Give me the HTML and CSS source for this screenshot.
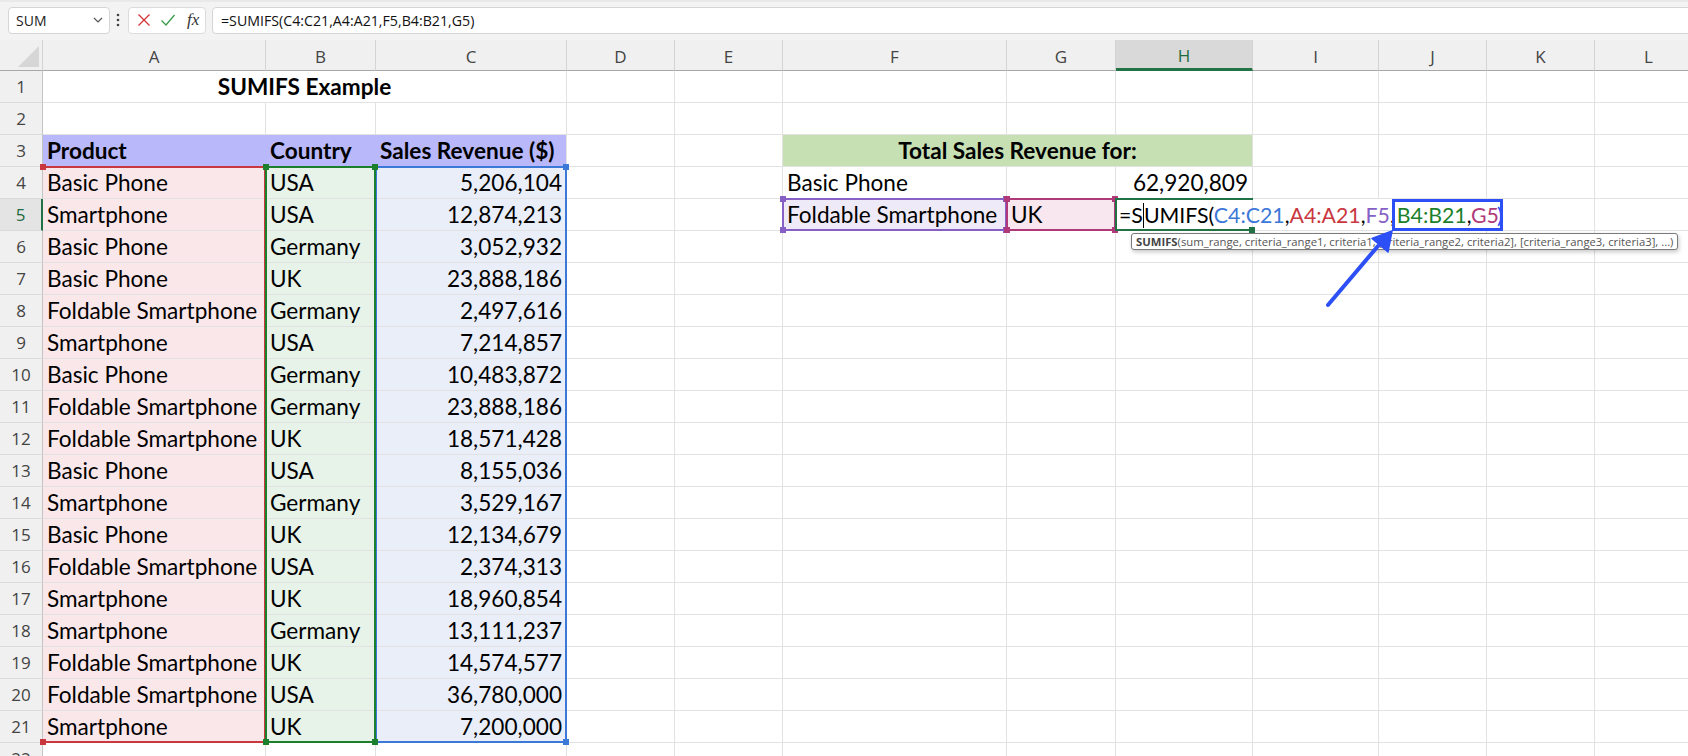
FILE: index.html
```html
<!DOCTYPE html>
<html>
<head>
<meta charset="utf-8">
<title>SUMIFS Example</title>
<link rel="stylesheet" href="styles.css">
</head>
<body>
<div class="toolbar">
  <div class="namebox"><span>SUM</span><svg class="chev" width="10" height="6" viewBox="0 0 10 6"><path d="M1 1l4 4 4-4" fill="none" stroke="#555" stroke-width="1.2"/></svg></div>
  <svg class="vdots" width="4" height="14" viewBox="0 0 4 14"><circle cx="2" cy="2" r="1.3"/><circle cx="2" cy="7" r="1.3"/><circle cx="2" cy="12" r="1.3"/></svg>
  <div class="fbtns">
    <svg width="14" height="14" viewBox="0 0 14 14"><path d="M1.5 1.5l11 11M12.5 1.5l-11 11" stroke="#d13438" stroke-width="1.3" fill="none"/></svg>
    <svg width="16" height="14" viewBox="0 0 16 14"><path d="M1.5 7.5l4.5 4.5L14.5 2" stroke="#3a9b4a" stroke-width="1.3" fill="none"/></svg>
    <span class="fx">fx</span>
  </div>
  <div class="fbox">=SUMIFS(C4:C21,A4:A21,F5,B4:B21,G5)</div>
</div>

<div class="sheet">
  <div class="ch corner"></div><div class="ch">A</div><div class="ch">B</div><div class="ch">C</div><div class="ch">D</div><div class="ch">E</div><div class="ch">F</div><div class="ch">G</div><div class="ch sel">H</div><div class="ch">I</div><div class="ch">J</div><div class="ch">K</div><div class="ch">L</div>

  <div class="rh">1</div><div class="c span3 ctr bold">SUMIFS Example</div><div class="c"></div><div class="c"></div><div class="c"></div><div class="c"></div><div class="c"></div><div class="c"></div><div class="c"></div><div class="c"></div><div class="c"></div>

  <div class="rh">2</div><div class="c"></div><div class="c"></div><div class="c"></div><div class="c"></div><div class="c"></div><div class="c"></div><div class="c"></div><div class="c"></div><div class="c"></div><div class="c"></div><div class="c"></div><div class="c"></div>

  <div class="rh">3</div><div class="c hdr bold">Product</div><div class="c hdr bold">Country</div><div class="c hdr hdr-last bold">Sales Revenue ($)</div><div class="c"></div><div class="c"></div><div class="c span3 ctr bold total">Total Sales Revenue for:</div><div class="c"></div><div class="c"></div><div class="c"></div><div class="c"></div>

  <div class="rh">4</div>
  <div class="c ta ov"><i class="rng ra"><b class="sq tl"></b><b class="sq bl"></b></i>Basic Phone</div>
  <div class="c tb ov"><i class="rng rg"><b class="sq tl"></b><b class="sq tr"></b><b class="sq bl"></b><b class="sq br"></b></i>USA</div>
  <div class="c tc r ov"><i class="rng rc"><b class="sq tr"></b><b class="sq br"></b></i>5,206,104</div>
  <div class="c"></div><div class="c"></div><div class="c">Basic Phone</div><div class="c"></div><div class="c r">62,920,809</div><div class="c"></div><div class="c"></div><div class="c"></div><div class="c"></div>

  <div class="rh sel">5</div>
  <div class="c ta">Smartphone</div><div class="c tb">USA</div><div class="c tc r">12,874,213</div>
  <div class="c"></div><div class="c"></div>
  <div class="c tf ov"><i class="cellbox pf"><b class="sq tl"></b><b class="sq tr"></b><b class="sq bl"></b><b class="sq br"></b></i>Foldable Smartphone</div>
  <div class="c tg ov"><i class="cellbox pg"><b class="sq tl"></b><b class="sq tr"></b><b class="sq bl"></b><b class="sq br"></b></i>UK</div>
  <div class="c edit"><i class="active"><b class="sq br"></b></i><span class="ftext">=S<span class="caret"></span>UMIFS(<span class="k-blue">C4:C21</span>,<span class="k-red">A4:A21</span>,<span class="k-purple">F5</span>,<span class="hl"><span class="k-green">B4:B21</span>,<span class="k-mag">G5</span></span><span class="paren">)</span></span><div class="tip"><b>SUMIFS</b>(sum_range, criteria_range1, criteria1, [criteria_range2, criteria2], [criteria_range3, criteria3], ...)</div></div>
  <div class="c nob"></div><div class="c nob"></div><div class="c"></div><div class="c"></div>

  <div class="rh">6</div><div class="c ta">Basic Phone</div><div class="c tb">Germany</div><div class="c tc r">3,052,932</div><div class="c"></div><div class="c"></div><div class="c"></div><div class="c"></div><div class="c"></div><div class="c"></div><div class="c"></div><div class="c"></div><div class="c"></div>
  <div class="rh">7</div><div class="c ta">Basic Phone</div><div class="c tb">UK</div><div class="c tc r">23,888,186</div><div class="c"></div><div class="c"></div><div class="c"></div><div class="c"></div><div class="c"></div><div class="c"></div><div class="c"></div><div class="c"></div><div class="c"></div>
  <div class="rh">8</div><div class="c ta">Foldable Smartphone</div><div class="c tb">Germany</div><div class="c tc r">2,497,616</div><div class="c"></div><div class="c"></div><div class="c"></div><div class="c"></div><div class="c"></div><div class="c"></div><div class="c"></div><div class="c"></div><div class="c"></div>
  <div class="rh">9</div><div class="c ta">Smartphone</div><div class="c tb">USA</div><div class="c tc r">7,214,857</div><div class="c"></div><div class="c"></div><div class="c"></div><div class="c"></div><div class="c"></div><div class="c"></div><div class="c"></div><div class="c"></div><div class="c"></div>
  <div class="rh">10</div><div class="c ta">Basic Phone</div><div class="c tb">Germany</div><div class="c tc r">10,483,872</div><div class="c"></div><div class="c"></div><div class="c"></div><div class="c"></div><div class="c"></div><div class="c"></div><div class="c"></div><div class="c"></div><div class="c"></div>
  <div class="rh">11</div><div class="c ta">Foldable Smartphone</div><div class="c tb">Germany</div><div class="c tc r">23,888,186</div><div class="c"></div><div class="c"></div><div class="c"></div><div class="c"></div><div class="c"></div><div class="c"></div><div class="c"></div><div class="c"></div><div class="c"></div>
  <div class="rh">12</div><div class="c ta">Foldable Smartphone</div><div class="c tb">UK</div><div class="c tc r">18,571,428</div><div class="c"></div><div class="c"></div><div class="c"></div><div class="c"></div><div class="c"></div><div class="c"></div><div class="c"></div><div class="c"></div><div class="c"></div>
  <div class="rh">13</div><div class="c ta">Basic Phone</div><div class="c tb">USA</div><div class="c tc r">8,155,036</div><div class="c"></div><div class="c"></div><div class="c"></div><div class="c"></div><div class="c"></div><div class="c"></div><div class="c"></div><div class="c"></div><div class="c"></div>
  <div class="rh">14</div><div class="c ta">Smartphone</div><div class="c tb">Germany</div><div class="c tc r">3,529,167</div><div class="c"></div><div class="c"></div><div class="c"></div><div class="c"></div><div class="c"></div><div class="c"></div><div class="c"></div><div class="c"></div><div class="c"></div>
  <div class="rh">15</div><div class="c ta">Basic Phone</div><div class="c tb">UK</div><div class="c tc r">12,134,679</div><div class="c"></div><div class="c"></div><div class="c"></div><div class="c"></div><div class="c"></div><div class="c"></div><div class="c"></div><div class="c"></div><div class="c"></div>
  <div class="rh">16</div><div class="c ta">Foldable Smartphone</div><div class="c tb">USA</div><div class="c tc r">2,374,313</div><div class="c"></div><div class="c"></div><div class="c"></div><div class="c"></div><div class="c"></div><div class="c"></div><div class="c"></div><div class="c"></div><div class="c"></div>
  <div class="rh">17</div><div class="c ta">Smartphone</div><div class="c tb">UK</div><div class="c tc r">18,960,854</div><div class="c"></div><div class="c"></div><div class="c"></div><div class="c"></div><div class="c"></div><div class="c"></div><div class="c"></div><div class="c"></div><div class="c"></div>
  <div class="rh">18</div><div class="c ta">Smartphone</div><div class="c tb">Germany</div><div class="c tc r">13,111,237</div><div class="c"></div><div class="c"></div><div class="c"></div><div class="c"></div><div class="c"></div><div class="c"></div><div class="c"></div><div class="c"></div><div class="c"></div>
  <div class="rh">19</div><div class="c ta">Foldable Smartphone</div><div class="c tb">UK</div><div class="c tc r">14,574,577</div><div class="c"></div><div class="c"></div><div class="c"></div><div class="c"></div><div class="c"></div><div class="c"></div><div class="c"></div><div class="c"></div><div class="c"></div>
  <div class="rh">20</div><div class="c ta">Foldable Smartphone</div><div class="c tb">USA</div><div class="c tc r">36,780,000</div><div class="c"></div><div class="c"></div><div class="c"></div><div class="c"></div><div class="c"></div><div class="c"></div><div class="c"></div><div class="c"></div><div class="c"></div>
  <div class="rh">21</div><div class="c ta">Smartphone</div><div class="c tb">UK</div><div class="c tc r">7,200,000</div><div class="c"></div><div class="c"></div><div class="c"></div><div class="c"></div><div class="c"></div><div class="c"></div><div class="c"></div><div class="c"></div><div class="c"></div>
  <div class="rh">22</div><div class="c"></div><div class="c"></div><div class="c"></div><div class="c"></div><div class="c"></div><div class="c"></div><div class="c"></div><div class="c"></div><div class="c"></div><div class="c"></div><div class="c"></div><div class="c"></div>

  <svg class="arrow" width="100" height="130" viewBox="0 0 100 130"><path d="M28 80L78 21" stroke="#2c4ff6" stroke-width="4" stroke-linecap="round" fill="none"/><path d="M92 6L88 27L72 13.5Z" fill="#2c4ff6" stroke="#2c4ff6" stroke-width="1.5" stroke-linejoin="round"/></svg>
</div>
</body>
</html>
```

FILE: styles.css
```css
* { box-sizing: border-box; margin: 0; padding: 0; }
html, body { width: 1688px; height: 756px; overflow: hidden; }
body { background: #fff; font-family: Lato, "Liberation Sans", sans-serif; color: #000; }

/* ---------- formula bar ---------- */
.toolbar {
  height: 40px;
  background: linear-gradient(#e9e9eb 0, #e9e9eb 2px, #f3f3f3 2px);
  display: flex;
  align-items: center;
  padding-left: 8px;
}
.namebox {
  width: 102px; height: 27px;
  background: #fff; border: 1px solid #d5d5d5; border-radius: 4px;
  display: flex; align-items: center; justify-content: space-between;
  padding: 0 6px 0 7px;
  font-family: "Open Sans", sans-serif; font-size: 14px; color: #222;
}
.vdots { margin: 0 8px 0 6px; fill: #444; }
.fbtns {
  width: 78px; height: 27px;
  background: #fff; border: 1px solid #dcdcdc; border-radius: 4px;
  display: flex; align-items: center; gap: 9px; padding-left: 8px;
}
.fx { font-family: "Liberation Serif", serif; font-style: italic; font-size: 17px; color: #333; margin-left: 2px; }
.fbox {
  flex: 1; height: 27px; margin-left: 6px; margin-right: -6px;
  background: #fff; border: 1px solid #d5d5d5; border-radius: 4px;
  display: flex; align-items: center; padding-left: 8px;
  font-family: "Open Sans", sans-serif; font-size: 14.2px; color: #111;
}

/* ---------- sheet ---------- */
.sheet {
  position: relative;
  display: grid;
  grid-template-columns: 43px 223px 110px 191px 108px 108px 224px 109px 137px 126px 108px 108px 108px;
  grid-template-rows: 31px;
  grid-auto-rows: 32px;
}
.ch {
  background: #f0f0f0;
  border-right: 1px solid #d4d4d4;
  border-bottom: 1px solid #a8a8a8;
  display: flex; align-items: center; justify-content: center;
  font-family: "Open Sans", sans-serif; font-size: 17px; color: #444;
  padding-top: 2px;
}
.ch.sel { background: #d9d9d9; color: #1d6b3f; border-bottom: 3px solid #217346; }
.corner { position: relative; }
.corner::after {
  content: ""; position: absolute; right: 3px; bottom: 3px; width: 21px; height: 21px;
  background: #d6d6d6; clip-path: polygon(100% 0, 100% 100%, 0 100%);
}
.rh {
  background: #f0f0f0;
  border-right: 1px solid #c4c4c4;
  border-bottom: 1px solid #dadada;
  display: flex; align-items: center; justify-content: center;
  font-family: "Open Sans", sans-serif; font-size: 17px; color: #444;
}
.rh.sel { color: #1d6b3f; background: #e4e4e4; border-right: 2px solid #217346; }

.c {
  border-right: 1px solid #e2e2e2;
  border-bottom: 1px solid #e2e2e2;
  display: flex; align-items: flex-end;
  padding: 0 4px 1px;
  font-size: 22.6px; line-height: 28px;
  white-space: nowrap; overflow: hidden;
}
.r { justify-content: flex-end; }
.ctr { justify-content: center; }
.bold { font-weight: 700; }
.span3 { grid-column: span 3; }
.hdr { background: #b8b8fb; border-right-color: #b8b8fb; }
.hdr-last { border-right-color: #e2e2e2; }
.total { background: #c6e0b4; }
.nob { border-right-color: transparent; }

.ta { background: #fae7ea; }
.tb { background: #e7f2e8; }
.tc { background: #e9eef9; }
.tf { background: #efeaf7; }
.tg { background: #f8e7ef; }

/* reference range outlines (overlays) */
.ov { position: relative; overflow: visible; }
.rng, .cellbox, .active {
  position: absolute; pointer-events: none;
  border: 2px solid currentColor;
}
.rng { top: -1px; left: -1px; right: -1px; height: calc(18 * 32px + 1px); }
.cellbox, .active { top: -1px; left: -1px; right: -1px; bottom: -1px; }
.ra { color: #c9373f; border-left-width: 0; z-index: 3; }
.rc { color: #3c78d8; z-index: 4; }
.rg { color: #1b7f2b; z-index: 5; }
.pf { color: #8660c5; z-index: 3; }
.pg { color: #b0397a; z-index: 4; }
.active { color: #217346; z-index: 5; border-right-width: 0; }
.sq { position: absolute; width: 6px; height: 6px; background: currentColor; }
.sq.tl { top: -4px; left: -4px; }
.sq.tr { top: -4px; right: -4px; }
.sq.bl { bottom: -4px; left: -4px; }
.sq.br { bottom: -4px; right: -4px; }
.ra .sq.tl, .ra .sq.bl { left: -2px; }
.active .sq.br { right: -2px; }

/* in-cell edit */
.edit { position: relative; overflow: visible; z-index: 6; padding-left: 3px; background: #fff; }
.ftext { position: relative; z-index: 6; font-size: 21.3px; }
.caret { display: inline-block; width: 1px; height: 25px; background: #000; vertical-align: -5px; }
.k-blue { color: #3c78d8; }
.k-red { color: #c9373f; }
.k-purple { color: #8660c5; }
.k-green { color: #1b7f2b; }
.k-mag { color: #b0397a; }
.hl { border: 3px solid #2c4ff6; padding: 0 1px 0 2px; margin-left: -3px; }
.paren { color: #2c4ff6; margin-left: -6px; }
.tip {
  position: absolute; left: 15px; top: calc(100% + 3px); z-index: 7;
  background: #fff; border: 1px solid #7a7a7a; border-radius: 3px;
  padding: 0 4px; line-height: 15px;
  font-family: "Open Sans", sans-serif; font-size: 11.3px; color: #555;
  box-shadow: 1px 2px 4px rgba(0,0,0,.22);
  white-space: nowrap;
}
.tip b { color: #444; }

.arrow { position: absolute; left: 1300px; top: 185px; z-index: 10; }
```
